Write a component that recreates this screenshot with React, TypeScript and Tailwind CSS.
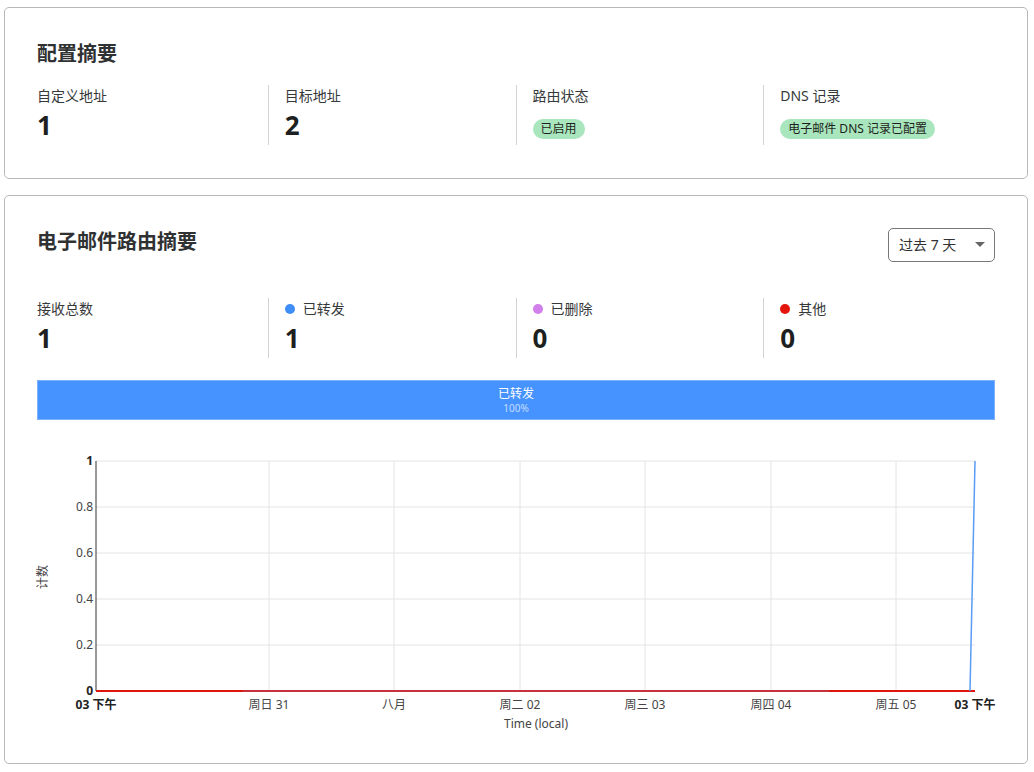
import React from "react";

type Stat = {
  label: string;
  value?: string;
  badge?: string;
  dot?: string;
};

const configStats: Stat[] = [
  { label: "自定义地址", value: "1" },
  { label: "目标地址", value: "2" },
  { label: "路由状态", badge: "已启用" },
  { label: "DNS 记录", badge: "电子邮件 DNS 记录已配置" },
];

const routingStats: Stat[] = [
  { label: "接收总数", value: "1" },
  { label: "已转发", value: "1", dot: "#3f8ef8" },
  { label: "已删除", value: "0", dot: "#d17fea" },
  { label: "其他", value: "0", dot: "#e3150c" },
];

function StatRow({ stats }: { stats: Stat[] }) {
  return (
    <div className="flex">
      {stats.map((s, i) => (
        <div
          key={s.label}
          className={
            "flex h-[60px] flex-1 flex-col px-4 first:pl-0 last:pr-0" +
            (i > 0 ? " border-l border-[#d4d4d4]" : "")
          }
        >
          <div className="mt-[1px] flex h-5 items-center gap-2 text-sm leading-5 text-[#36393a]">
            {s.dot && (
              <span className="h-[10px] w-[10px] rounded-full" style={{ background: s.dot }} />
            )}
            <span>{s.label}</span>
          </div>
          {s.value && (
            <div className="mt-[3px] text-[26px] font-bold leading-8 text-[#1d1f20]">{s.value}</div>
          )}
          {s.badge && (
            <div className="mt-[13px] flex">
              <span className="rounded-full bg-[#a9e6bd] px-2 text-xs leading-5 text-[#1d1f20]">
                {s.badge}
              </span>
            </div>
          )}
        </div>
      ))}
    </div>
  );
}

const yTicks = [
  { y: 20, label: "1", bold: true },
  { y: 66, label: "0.8" },
  { y: 112, label: "0.6" },
  { y: 158, label: "0.4" },
  { y: 204, label: "0.2" },
  { y: 250, label: "0", bold: true },
];

const xTicks = [
  { x: 59, label: "03 下午", bold: true, grid: false },
  { x: 232, label: "周日 31", grid: true },
  { x: 357, label: "八月", grid: true },
  { x: 483, label: "周二 02", grid: true },
  { x: 608, label: "周三 03", grid: true },
  { x: 734, label: "周四 04", grid: true },
  { x: 859, label: "周五 05", grid: true },
  { x: 938, label: "03 下午", bold: true, grid: false },
];

function Chart() {
  const left = 59;
  const right = 938;
  return (
    <svg
      width="958"
      height="290"
      className="mt-[21px] block overflow-visible"
      style={{ fontFamily: "'Noto Sans', 'Noto Sans CJK SC', sans-serif" }}
    >
      {yTicks.slice(0, 5).map((t) => (
        <line key={t.y} x1={left} x2={right} y1={t.y} y2={t.y} stroke="#e4e4e4" strokeWidth="1" />
      ))}
      {xTicks
        .filter((t) => t.grid)
        .map((t) => (
          <line key={t.x} x1={t.x} x2={t.x} y1={20} y2={250} stroke="#e4e4e4" strokeWidth="1" />
        ))}
      <line x1={left} x2={left} y1={20} y2={250} stroke="#333" strokeWidth="1" />
      {yTicks.map((t) => (
        <text
          key={t.label}
          x={56}
          y={t.y + 4}
          textAnchor="end"
          fontSize="12"
          fontWeight={t.bold ? 700 : 400}
          fill={t.bold ? "#222" : "#444"}
        >
          {t.label}
        </text>
      ))}
      {xTicks.map((t, i) => (
        <text
          key={i}
          x={t.x}
          y={268}
          textAnchor="middle"
          fontSize="12"
          fontWeight={t.bold ? 700 : 400}
          fill={t.bold ? "#222" : "#444"}
        >
          {t.label}
        </text>
      ))}
      <text x={499} y={287} textAnchor="middle" fontSize="12" fill="#444">
        Time (local)
      </text>
      <text x={10} y={136} textAnchor="middle" fontSize="12" fill="#444" transform="rotate(-90 10 136)">
        计数
      </text>
      <line x1={left} x2={206} y1={250} y2={250} stroke="#e0150b" strokeWidth="2" />
      <line x1={206} x2={792} y1={250} y2={250} stroke="#c8313c" strokeWidth="2" />
      <line x1={792} x2={right} y1={250} y2={250} stroke="#e0150b" strokeWidth="2" />
      <polyline points="933,250 938,20" fill="none" stroke="#5a9cf6" strokeWidth="1.5" />
    </svg>
  );
}

export default function App() {
  return (
    <div
      className="min-h-screen bg-white pb-[9px] pl-1 pr-1.5 pt-[7px]"
      style={{ fontFamily: "'Noto Sans', 'Noto Sans CJK SC', sans-serif" }}
    >
      <section className="rounded-[5px] border border-[#b8b8b8] px-8 pb-[33px] pt-8">
        <h2 className="mb-[17px] text-xl font-bold leading-7 text-[#2f3132]">配置摘要</h2>
        <StatRow stats={configStats} />
      </section>

      <section className="mt-[16px] rounded-[5px] border border-[#b8b8b8] px-8 pb-8 pt-8">
        <div className="mb-9 flex items-start justify-between">
          <h2 className="text-xl font-bold leading-7 text-[#2f3132]">电子邮件路由摘要</h2>
          <button className="flex h-[34px] w-[107px] items-center justify-between rounded-[5px] border border-[#777] pl-[10px] pr-[9px] text-sm text-[#313131]">
            <span>过去 7 天</span>
            <svg width="10" height="6" viewBox="0 0 10 6">
              <path d="M0 0 L10 0 L5 5 Z" fill="#666" />
            </svg>
          </button>
        </div>
        <StatRow stats={routingStats} />
        <div className="mt-[22px] flex h-10 flex-col items-center justify-center border border-[#7cb2ff] bg-[#4693ff]">
          <span className="text-xs leading-4 text-white">已转发</span>
          <span className="text-[10px] leading-3 text-[#c3dcff]">100%</span>
        </div>
        <Chart />
      </section>
    </div>
  );
}
